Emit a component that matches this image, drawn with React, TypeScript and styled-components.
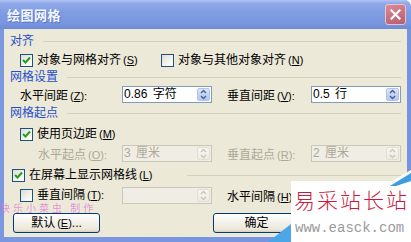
import React from "react";
import styled, { createGlobalStyle } from "styled-components";

const Global = createGlobalStyle`
  html, body { margin: 0; padding: 0; background: #ffffff; }
  body {
    font-family: "Liberation Sans", "Noto Sans CJK SC", sans-serif;
    font-size: 12px;
    text-autospace: no-autospace;
  }
  #root { width: 411px; height: 242px; overflow: hidden; }
  u { text-decoration: underline; text-underline-offset: 1px; }
`;

const Win = styled.div`
  position: relative;
  width: 411px;
  height: 242px;
  display: flex;
  flex-direction: column;
  background: linear-gradient(90deg, #7b97e0, #7693de);
  border-top-right-radius: 7px;
  overflow: hidden;
`;

const TitleBar = styled.div`
  height: 29px;
  flex: none;
  display: flex;
  align-items: center;
  justify-content: space-between;
  padding: 0 5px 0 7px;
  background: linear-gradient(
    180deg,
    #b0c3f2 0%,
    #8fa9e8 12%,
    #7f9ce2 45%,
    #7896df 80%,
    #6c8ad6 100%
  );
`;

const Title = styled.span`
  color: #f4f7ff;
  font-family: "Noto Sans CJK SC", sans-serif;
  font-weight: 700;
  font-size: 13px;
  letter-spacing: 0.5px;
  text-shadow: 1px 1px 0 #5a78c8;
`;

const CloseBtn = styled.span`
  width: 21px;
  height: 21px;
  box-sizing: border-box;
  border: 1px solid #e9c2ca;
  border-radius: 3px;
  background: linear-gradient(160deg, #d98c99 0%, #c7707f 55%, #b9606f 100%);
  display: flex;
  align-items: center;
  justify-content: center;
`;

const Body = styled.div`
  flex: 1;
  margin: 0 4px 5px 4px;
  background: #ece9d8;
  display: flex;
  flex-direction: column;
  padding: 6px 6px 0 6px;
  color: #000;
`;

const Header = styled.div<{ $mt: number }>`
  display: flex;
  align-items: center;
  height: 12px;
  line-height: 12px;
  margin-top: ${(p) => p.$mt}px;
  color: #1f4fcc;
  white-space: nowrap;
`;

const Rule = styled.div<{ $gap: number }>`
  flex: 1;
  height: 0;
  margin-left: ${(p) => p.$gap}px;
  border-top: 1px solid #d3d0c0;
`;

const CheckRow = styled.div<{ $mt: number; $indent: number }>`
  display: flex;
  align-items: center;
  height: 13px;
  margin-top: ${(p) => p.$mt}px;
  padding-left: ${(p) => p.$indent}px;
  white-space: nowrap;
`;

const CheckItem = styled.label<{ $w?: number }>`
  display: flex;
  align-items: center;
  gap: 4px;
  flex: none;
  width: ${(p) => (p.$w ? `${p.$w}px` : "auto")};
  line-height: 13px;
`;

const Box = styled.span`
  width: 13px;
  height: 13px;
  box-sizing: border-box;
  border: 1px solid #1c5180;
  background: linear-gradient(135deg, #dcdcd5 0%, #f3f2ea 55%, #ffffff 100%);
  display: flex;
  align-items: center;
  justify-content: center;
  flex: none;
`;

const Key = styled.span`
  font-family: "Liberation Sans", sans-serif;
  font-size: 11px;
  margin-left: 2px;
`;

const FieldRow = styled.div<{ $mt: number }>`
  display: flex;
  align-items: center;
  height: 17px;
  margin-top: ${(p) => p.$mt}px;
  padding-left: 10px;
  gap: 15px;
  white-space: nowrap;
`;

const Field = styled.div`
  display: flex;
  align-items: center;
`;

const FieldLabel = styled.span<{ $w: number; $pad?: number; $disabled?: boolean }>`
  box-sizing: border-box;
  width: ${(p) => p.$w}px;
  padding-left: ${(p) => p.$pad ?? 0}px;
  color: ${(p) => (p.$disabled ? "#aca899" : "#000")};
  flex: none;
`;

const Spin = styled.div<{ $disabled?: boolean }>`
  width: 90px;
  height: 17px;
  box-sizing: border-box;
  border: 1px solid ${(p) => (p.$disabled ? "#c9c7ba" : "#7f9db9")};
  background: ${(p) => (p.$disabled ? "#f0eee4" : "#ffffff")};
  color: ${(p) => (p.$disabled ? "#aca899" : "#000")};
  display: flex;
  align-items: center;
  padding-left: 1px;
  flex: none;
`;

const SpinValue = styled.span`
  flex: 1;
  line-height: 13px;
  word-spacing: 2px;
`;

const SpinBtn = styled.span<{ $disabled?: boolean }>`
  width: 13px;
  height: 13px;
  margin-right: 1px;
  box-sizing: border-box;
  border: 1px solid ${(p) => (p.$disabled ? "#e2dfd2" : "#b4c4ec")};
  border-radius: 2px;
  background: ${(p) =>
    p.$disabled
      ? "linear-gradient(180deg, #f7f6f0, #ecebe4)"
      : "linear-gradient(180deg, #dde6fd 0%, #c3d2f8 50%, #b5c7f4 100%)"};
  display: flex;
  align-items: center;
  justify-content: center;
`;

const ButtonRow = styled.div`
  display: flex;
  margin-top: 9px;
  padding-left: 3px;
  gap: 113px;
`;

const Button = styled.button`
  width: 87px;
  height: 20px;
  box-sizing: border-box;
  border: 1px solid #003c74;
  border-radius: 3px;
  background: linear-gradient(180deg, #ffffff 0%, #f4f3ee 40%, #ece9d8 85%, #d6d0c5 100%);
  font-family: "Liberation Sans", "Noto Sans CJK SC", sans-serif;
  font-size: 12px;
  color: #000;
  padding: 0;
  line-height: 16px;
`;

const PinkMark = styled.span`
  position: absolute;
  left: 0;
  top: 202px;
  font-family: "Noto Sans CJK SC", sans-serif;
  font-size: 10px;
  line-height: 12px;
  letter-spacing: 3px;
  color: rgba(226, 110, 212, 0.7);
  white-space: nowrap;
`;

const Stamp = styled.div`
  position: absolute;
  left: 268px;
  top: 170px;
  width: 143px;
  height: 72px;
`;

const StampArt = styled.svg`
  position: absolute;
  left: 0;
  top: 0;
`;

const StampTitle = styled.span`
  position: absolute;
  left: 26px;
  top: 14px;
  font-family: "Noto Sans CJK SC", sans-serif;
  font-weight: 300;
  font-size: 21px;
  letter-spacing: 2px;
  line-height: 30px;
  color: #c8193f;
  white-space: nowrap;
`;

const StampUrl = styled.span`
  position: absolute;
  left: 27px;
  top: 50px;
  font-family: "Liberation Mono", monospace;
  font-size: 14px;
  line-height: 16px;
  color: #9a9a9a;
  white-space: nowrap;
`;

const Check = () => (
  <svg width="9" height="9" viewBox="0 0 9 9">
    <polyline points="1,4 3.5,6.5 8,1.5" fill="none" stroke="#21a121" strokeWidth="2" />
  </svg>
);

const Arrows = ({ disabled }: { disabled?: boolean }) => (
  <svg width="9" height="11" viewBox="0 0 9 11">
    <g fill="none" stroke={disabled ? "#c9c7ba" : "#4d6185"} strokeWidth="1.4">
      <polyline points="2,4 4.5,1.5 7,4" />
      <polyline points="2,7 4.5,9.5 7,7" />
    </g>
  </svg>
);

const SpinBox = ({ value, disabled }: { value: string; disabled?: boolean }) => (
  <Spin $disabled={disabled}>
    <SpinValue>{value}</SpinValue>
    <SpinBtn $disabled={disabled}>
      <Arrows disabled={disabled} />
    </SpinBtn>
  </Spin>
);

const AK = ({ k, colon }: { k: string; colon?: boolean }) => (
  <Key>
    (<u>{k}</u>){colon ? ":" : ""}
  </Key>
);

export default function App() {
  return (
    <>
      <Global />
      <Win>
        <TitleBar>
          <Title>绘图网格</Title>
          <CloseBtn>
            <svg width="11" height="11" viewBox="0 0 11 11">
              <g stroke="#ffffff" strokeWidth="2.2" strokeLinecap="square">
                <line x1="1.5" y1="1.5" x2="9.5" y2="9.5" />
                <line x1="9.5" y1="1.5" x2="1.5" y2="9.5" />
              </g>
            </svg>
          </CloseBtn>
        </TitleBar>
        <Body>
          <Header $mt={0}>
            对齐
            <Rule $gap={9} />
          </Header>
          <CheckRow $mt={7} $indent={10}>
            <CheckItem $w={141}>
              <Box>
                <Check />
              </Box>
              <span>
                对象与网格对齐
                <AK k="S" />
              </span>
            </CheckItem>
            <CheckItem>
              <Box />
              <span>
                对象与其他对象对齐
                <AK k="N" />
              </span>
            </CheckItem>
          </CheckRow>
          <Header $mt={4}>
            网格设置
            <Rule $gap={9} />
          </Header>
          <FieldRow $mt={3}>
            <Field>
              <FieldLabel $w={102}>
                水平间距
                <AK k="Z" colon />
              </FieldLabel>
              <SpinBox value="0.86 字符" />
            </Field>
            <Field>
              <FieldLabel $w={84}>
                垂直间距
                <AK k="V" colon />
              </FieldLabel>
              <SpinBox value="0.5 行" />
            </Field>
          </FieldRow>
          <Header $mt={4}>
            网格起点
            <Rule $gap={9} />
          </Header>
          <CheckRow $mt={9} $indent={10}>
            <CheckItem>
              <Box>
                <Check />
              </Box>
              <span>
                使用页边距
                <AK k="M" />
              </span>
            </CheckItem>
          </CheckRow>
          <FieldRow $mt={4}>
            <Field>
              <FieldLabel $w={102} $pad={18} $disabled>
                水平起点
                <AK k="O" colon />
              </FieldLabel>
              <SpinBox value="3 厘米" disabled />
            </Field>
            <Field>
              <FieldLabel $w={84} $disabled>
                垂直起点
                <AK k="R" colon />
              </FieldLabel>
              <SpinBox value="2 厘米" disabled />
            </Field>
          </FieldRow>
          <CheckRow $mt={7} $indent={2}>
            <CheckItem $w={175}>
              <Box>
                <Check />
              </Box>
              <span>
                在屏幕上显示网格线
                <AK k="L" />
              </span>
            </CheckItem>
            <Rule $gap={0} />
          </CheckRow>
          <FieldRow $mt={5}>
            <Field>
              <CheckItem $w={102}>
                <Box />
                <span>
                  垂直间隔
                  <AK k="T" colon />
                </span>
              </CheckItem>
              <SpinBox value="" disabled />
            </Field>
            <Field>
              <FieldLabel $w={84}>
                水平间隔
                <AK k="H" colon />
              </FieldLabel>
              <SpinBox value="" disabled />
            </Field>
          </FieldRow>
          <ButtonRow>
            <Button>
              默认
              <AK k="E" />
              ...
            </Button>
            <Button>确定</Button>
          </ButtonRow>
        </Body>
        <PinkMark>快乐小菜虫 制作</PinkMark>
        <Stamp>
          <StampArt width="143" height="72" viewBox="0 0 143 72">
            <polygon points="23,11 124,11 143,0 143,72 23,72" fill="#ffffff" />
            <polygon points="122,16 143,3 143,11 128,16" fill="#3f9be0" />
            <polygon points="0,72 23,54 23,72" fill="#4aa6e6" />
          </StampArt>
          <StampTitle>易采站长站</StampTitle>
          <StampUrl>www.easck.com</StampUrl>
        </Stamp>
      </Win>
    </>
  );
}
